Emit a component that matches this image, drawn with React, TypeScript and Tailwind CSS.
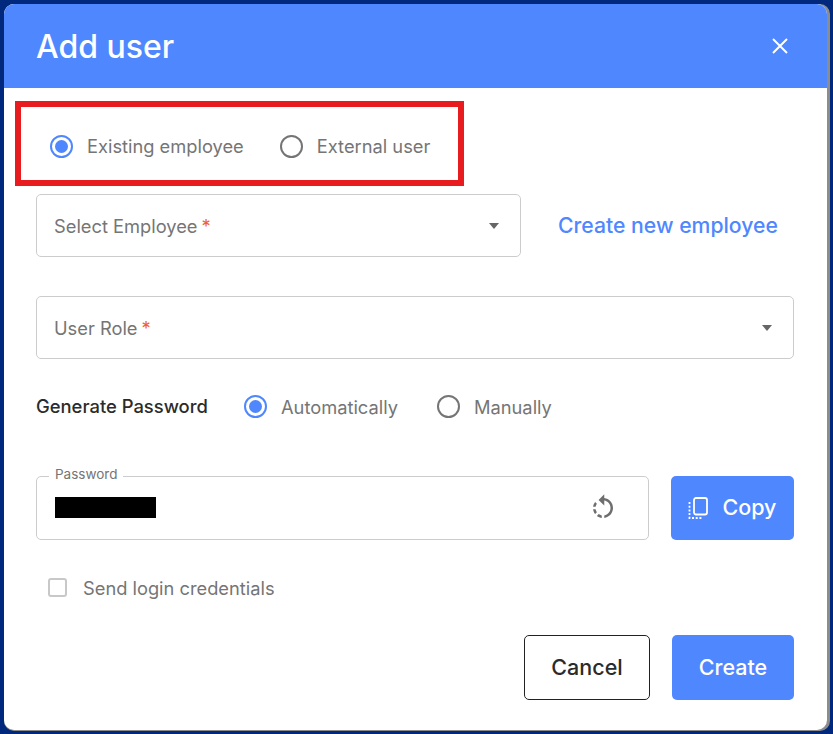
import React from 'react';
import { MdRotateLeft } from 'react-icons/md';

function Radio({ label, checked, className }: { label: string; checked?: boolean; className?: string }) {
  return (
    <div className={`flex items-center gap-[14px] ${className ?? ''}`}>
      <span className={`flex h-[23px] w-[23px] items-center justify-center rounded-full border-[2px] ${checked ? 'border-[#4f87ff]' : 'border-[#757575]'}`}>
        {checked && <span className="h-[13px] w-[13px] rounded-full bg-[#4f87ff]" />}
      </span>
      <span className="text-[18.3px] leading-[24px] text-[#757575]">{label}</span>
    </div>
  );
}

function SelectBox({ label, className }: { label: string; className?: string }) {
  return (
    <div className={`flex h-[63px] items-center justify-between rounded-[5px] border border-[#cccccc] pl-[17px] pr-[21px] ${className ?? ''}`}>
      <span className="mt-[3px] text-[18.3px] text-[#757575]">
        {label}<span className="ml-[4px] text-[#f0603c]">*</span>
      </span>
      <span className="h-0 w-0 border-x-[5.5px] border-t-[6px] border-x-transparent border-t-[#666666]" />
    </div>
  );
}

function CopyIcon() {
  return (
    <svg width="22" height="24" viewBox="0 0 22 24" fill="none" stroke="white">
      <rect x="6" y="2" width="13" height="16.5" rx="2" strokeWidth="1.8" />
      <path d="M1.5 6V22H15" strokeWidth="1.8" strokeDasharray="2 1.7" />
    </svg>
  );
}

export default function App() {
  return (
    <div className="h-[734px] w-[833px] overflow-hidden bg-[#00287c] pl-[4px] pt-[4px] font-['Inter',sans-serif]">
      <div className="h-[727px] w-[826px] rounded-[10px] bg-[#8c8c8c] pb-px pr-[3px]">
        <div className="h-full overflow-hidden rounded-[10px] bg-white">
          <div className="flex h-[84px] items-center justify-between bg-[#4f87ff] pl-[32px] pr-[38px]">
            <h1 className="pt-px text-[32px] font-medium text-white">Add user</h1>
            <svg width="18" height="18" viewBox="0 0 18 18" stroke="white" strokeWidth="2">
              <path d="M2 2L16 16M16 2L2 16" />
            </svg>
          </div>

          <div className="pl-[32px] pr-[33px]">
            <div className="-ml-[21px] mt-[13px] flex h-[85px] w-[449px] items-center gap-[36px] border-[6px] border-[#e81c1f] pl-[29px] pt-[5px]">
              <Radio label="Existing employee" checked />
              <Radio label="External user" />
            </div>

            <div className="mt-[8px] flex items-center">
              <SelectBox label="Select Employee" className="w-[485px]" />
              <span className="ml-[37px] text-[21.2px] font-medium text-[#4f87ff]">Create new employee</span>
            </div>

            <SelectBox label="User Role" className="mt-[39px]" />

            <div className="mt-[34px] flex items-center">
              <span className="w-[208px] text-[18.4px] font-medium text-[#2b2b2b]">Generate Password</span>
              <Radio label="Automatically" checked />
              <Radio label="Manually" className="ml-[39px]" />
            </div>

            <div className="mt-[55px] flex gap-[22px]">
              <div className="relative flex h-[64px] w-[613px] items-center justify-between rounded-[5px] border border-[#cccccc] pl-[18px] pr-[30px]">
                <span className="absolute -top-[12px] left-[12px] bg-white px-[6px] text-[13.5px] leading-[18px] text-[#757575]">Password</span>
                <div className="h-[21px] w-[101px] bg-black" />
                <MdRotateLeft className="h-[30px] w-[30px] text-[#6e6e6e]" />
              </div>
              <button className="flex h-[64px] w-[123px] items-center justify-center gap-[12px] rounded-[5px] bg-[#4f87ff] text-[21.5px] font-medium text-white">
                <CopyIcon />
                Copy
              </button>
            </div>

            <div className="ml-[12px] mt-[36px] flex items-center gap-[16px]">
              <span className="h-[19px] w-[19px] rounded-[3px] border-[2px] border-[#c8c8c8]" />
              <span className="text-[18.3px] leading-[24px] text-[#757575]">Send login credentials</span>
            </div>

            <div className="mt-[35px] flex justify-end gap-[22px]">
              <button className="h-[65px] w-[126px] rounded-[5px] border border-[#222222] bg-white text-[21.5px] font-medium text-[#2b2b2b]">Cancel</button>
              <button className="h-[65px] w-[122px] rounded-[5px] bg-[#4f87ff] text-[21.5px] font-medium text-white">Create</button>
            </div>
          </div>
        </div>
      </div>
    </div>
  );
}
